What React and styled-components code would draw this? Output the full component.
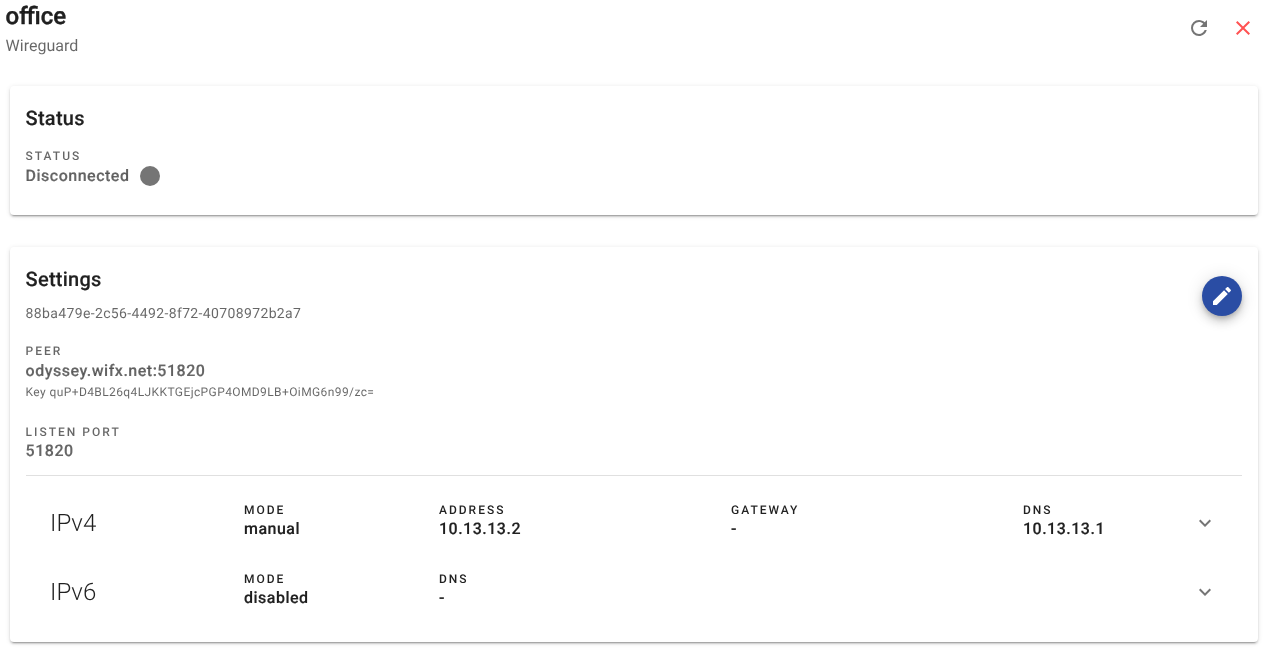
import styled, { createGlobalStyle } from 'styled-components';

const GlobalStyle = createGlobalStyle`
  * { box-sizing: border-box; }
  html, body { margin: 0; padding: 0; background: #fff; }
  body {
    font-family: Roboto, sans-serif;
    color: rgba(0, 0, 0, 0.87);
    text-rendering: geometricPrecision;
  }
`;

const MDI = {
  refresh: "M17.65,6.35C16.2,4.9 14.21,4 12,4A8,8 0 0,0 4,12A8,8 0 0,0 12,20C15.73,20 18.84,17.45 19.73,14H17.65C16.83,16.33 14.61,18 12,18A6,6 0 0,1 6,12A6,6 0 0,1 12,6C13.66,6 15.14,6.69 16.22,7.78L13,11H20V4L17.65,6.35Z",
  close: "M19,6.41L17.59,5L12,10.59L6.41,5L5,6.41L10.59,12L5,17.59L6.41,19L12,13.41L17.59,19L19,17.59L13.41,12L19,6.41Z",
  pencil: "M20.71,7.04C21.1,6.65 21.1,6 20.71,5.63L18.37,3.29C18,2.9 17.35,2.9 16.96,3.29L15.12,5.12L18.87,8.87M3,17.25V21H6.75L17.81,9.93L14.06,6.18L3,17.25Z",
  chevron: "M7.41,8.58L12,13.17L16.59,8.58L18,10L12,16L6,10L7.41,8.58Z",
};

function Icon({ path, size = 24, color = "currentColor" }) {
  return (
    <svg width={size} height={size} viewBox="0 0 24 24" fill={color}>
      <path d={path} />
    </svg>
  );
}

function Field({ label, value, width }) {
  return (
    <FieldBox $width={width}>
      <Overline $dark>{label}</Overline>
      <Value $dark>{value}</Value>
    </FieldBox>
  );
}

export default function App() {
  return (
    <Page>
      <GlobalStyle />
      <Header>
        <div>
          <Title>office</Title>
          <Subtitle>Wireguard</Subtitle>
        </div>
        <HeaderActions>
          <IconButton><Icon path={MDI.refresh} color="#757575" /></IconButton>
          <IconButton><Icon path={MDI.close} color="#ff5252" /></IconButton>
        </HeaderActions>
      </Header>

      <Card>
        <CardTitle>Status</CardTitle>
        <StatusBlock>
          <Overline>Status</Overline>
          <StatusRow>
            <Value>Disconnected</Value>
            <Dot />
          </StatusRow>
        </StatusBlock>
      </Card>

      <SettingsCard>
        <CardTitle>Settings</CardTitle>
        <Fab><Icon path={MDI.pencil} /></Fab>
        <Uuid>88ba479e-2c56-4492-8f72-40708972b2a7</Uuid>
        <Block>
          <Overline>Peer</Overline>
          <Value>odyssey.wifx.net:51820</Value>
          <Caption>Key quP+D4BL26q4LJKKTGEjcPGP4OMD9LB+OiMG6n99/zc=</Caption>
        </Block>
        <PortBlock>
          <Overline>Listen port</Overline>
          <Value>51820</Value>
        </PortBlock>
        <Divider />
        <IpList>
          <IpRow>
            <IpName>IPv4</IpName>
            <Field label="Mode" value="manual" width="195px" />
            <Field label="Address" value="10.13.13.2" width="292px" />
            <Field label="Gateway" value="-" width="292px" />
            <Field label="DNS" value="10.13.13.1" width="170px" />
            <Chevron><Icon path={MDI.chevron} color="#757575" /></Chevron>
          </IpRow>
          <IpRow>
            <IpName>IPv6</IpName>
            <Field label="Mode" value="disabled" width="195px" />
            <Field label="DNS" value="-" width="754px" />
            <Chevron><Icon path={MDI.chevron} color="#757575" /></Chevron>
          </IpRow>
        </IpList>
      </SettingsCard>
    </Page>
  );
}

const Page = styled.div`
  width: 1267px;
  height: 651px;
  overflow: hidden;
  background: #fff;
  will-change: transform;
`;

const Header = styled.header`
  height: 64px;
  padding: 0 6px 0 5.6px;
  display: flex;
  justify-content: space-between;
  align-items: flex-start;
`;

const Title = styled.h1`
  margin: 0;
  font-size: 24px;
  line-height: 32px;
  font-weight: 500;
  letter-spacing: normal;
  -webkit-text-stroke: 0.4px rgba(0, 0, 0, 0.87);
`;

const Subtitle = styled.div`
  font-size: 16px;
  line-height: 24px;
  margin-top: 2px;
  color: rgba(0, 0, 0, 0.6);
`;

const HeaderActions = styled.div`
  display: flex;
  gap: 8px;
  padding-top: 8px;
`;

const IconButton = styled.button`
  width: 36px;
  height: 40px;
  padding: 0;
  border: 0;
  background: none;
  display: flex;
  align-items: center;
  justify-content: center;
`;

const Card = styled.section`
  position: relative;
  margin: 22px 9px 0 10px;
  height: 129px;
  padding: 16px 16px 16px 15.6px;
  background: #fff;
  border-radius: 4px;
  box-shadow: 0 3px 1px -2px rgba(0, 0, 0, 0.2), 0 2px 2px 0 rgba(0, 0, 0, 0.14), 0 1px 5px 0 rgba(0, 0, 0, 0.12);
`;

const SettingsCard = styled(Card)`
  margin-top: 32px;
  height: 395px;
`;

const CardTitle = styled.h2`
  margin: 0;
  font-size: 20px;
  line-height: 32px;
  font-weight: 500;
  letter-spacing: 0.0125em;
  -webkit-text-stroke: 0.15px rgba(0, 0, 0, 0.87);
`;

const Overline = styled.div`
  font-size: 12px;
  line-height: 16px;
  font-weight: 500;
  letter-spacing: 0.1666em;
  text-transform: uppercase;
  color: ${p => (p.$dark ? 'rgba(0, 0, 0, 0.87)' : 'rgba(0, 0, 0, 0.6)')};
`;

const Value = styled.div`
  margin-top: 1px;
  font-size: 16px;
  line-height: 22px;
  font-weight: 500;
  letter-spacing: 0.03125em;
  color: ${p => (p.$dark ? 'rgba(0, 0, 0, 0.87)' : 'rgba(0, 0, 0, 0.6)')};
  -webkit-text-stroke: 0.15px ${p => (p.$dark ? 'rgba(0, 0, 0, 0.87)' : 'rgba(0, 0, 0, 0.6)')};
`;

const StatusBlock = styled.div`
  margin-top: 14px;
`;

const StatusRow = styled.div`
  display: flex;
  align-items: center;
  gap: 10.4px;
`;

const Dot = styled.span`
  width: 20px;
  height: 20px;
  border-radius: 50%;
  background: #757575;
`;

const Fab = styled.button`
  position: absolute;
  top: 29px;
  right: 16px;
  width: 40px;
  height: 40px;
  padding: 0;
  border: 0;
  border-radius: 50%;
  color: #fff;
  background: #2a4da4;
  display: flex;
  align-items: center;
  justify-content: center;
  box-shadow: 0 3px 5px -1px rgba(0, 0, 0, 0.2), 0 6px 10px 0 rgba(0, 0, 0, 0.14), 0 1px 18px 0 rgba(0, 0, 0, 0.12);
`;

const Uuid = styled.div`
  margin-top: 9px;
  font-size: 14px;
  line-height: 20px;
  letter-spacing: 0.36px;
  color: rgba(0, 0, 0, 0.6);
`;

const Block = styled.div`
  margin-top: 19px;
`;

const PortBlock = styled.div`
  margin-top: 22px;

  ${Value} {
    margin-top: 0;
  }
`;

const Caption = styled.div`
  font-size: 12px;
  line-height: 20px;
  letter-spacing: 0.0333em;
  color: rgba(0, 0, 0, 0.6);
`;

const Divider = styled.hr`
  margin: 13px 0 0;
  border: 0;
  border-top: 1px solid rgba(0, 0, 0, 0.12);
`;

const IpList = styled.div`
  padding-top: 12px;
`;

const IpRow = styled.div`
  height: 69px;
  padding-left: 24.4px;
  display: flex;
  align-items: center;
`;

const IpName = styled.div`
  width: 194px;
  font-size: 24px;
  font-weight: 300;
  line-height: 32px;
  color: rgba(0, 0, 0, 0.87);
`;

const FieldBox = styled.div`
  width: ${p => p.$width};
  padding-bottom: 3px;

  ${Value} {
    margin-top: 0;
  }
`;

const Chevron = styled.div`
  display: flex;
`;
